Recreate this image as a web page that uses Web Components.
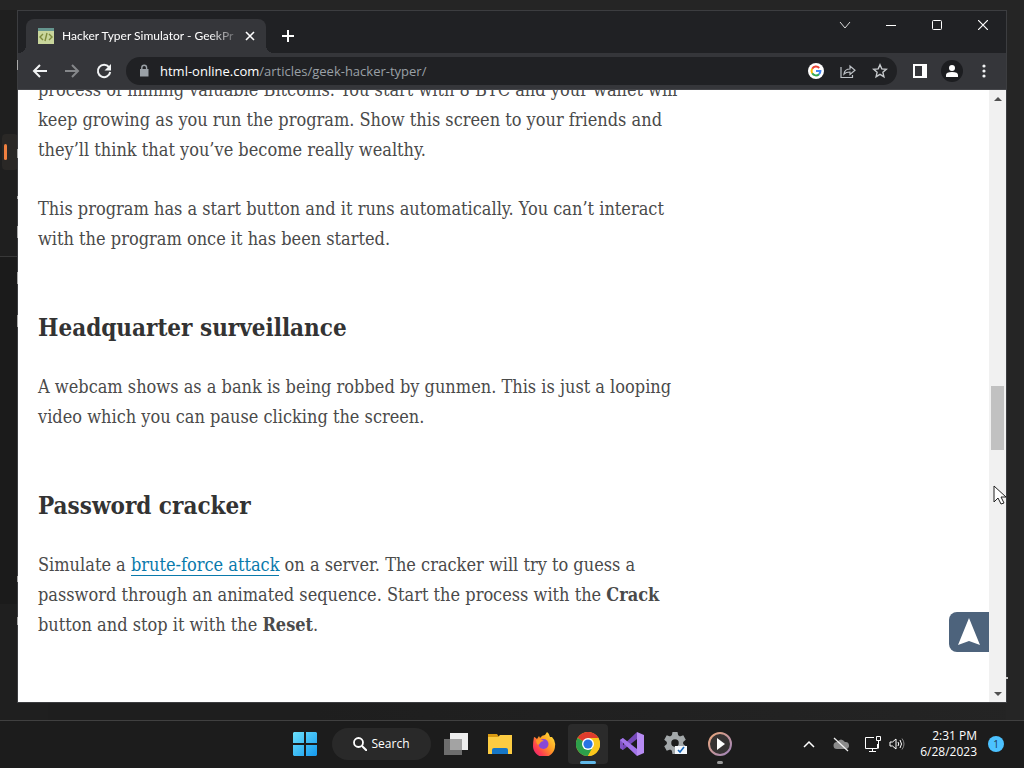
<!DOCTYPE html>
<html lang="en">
<head>
<meta charset="utf-8">
<title>Desktop</title>
<style>
html, body { margin: 0; height: 100%; overflow: hidden; background: #202020; font-family: "Open Sans", "Noto Sans", sans-serif; }
</style>
</head>
<body>
<desk-top>
  <browser-window>
    <page-article></page-article>
  </browser-window>
  <task-bar slot="bar"></task-bar>
</desk-top>
<script>
function define(name, html) {
  customElements.define(name, class extends HTMLElement {
    constructor() {
      super();
      const t = document.createElement('template');
      t.innerHTML = html;
      this.attachShadow({ mode: 'open' }).appendChild(t.content.cloneNode(true));
    }
  });
}
const reset = `*{box-sizing:border-box} svg{display:block;flex:none} button{font:inherit;color:inherit;background:none;border:0;padding:0;margin:0;display:flex;align-items:center;justify-content:center;flex:none}`;

define('desk-top', `
<style>${reset}
:host{display:grid;grid-template-rows:minmax(0,1fr) 48px;height:100vh;position:relative;background:linear-gradient(90deg,#1e1e1e 30%,#242424)}
main{position:relative;padding:10px 17px 17px;display:grid;min-height:0}
main>i{position:absolute;display:block}
.strip{left:0;top:0;width:48px;height:100%;background:#1f1f1f}
.top{left:0;top:0;width:100%;height:10px;background:#252525}
.row{left:2px;top:134px;width:16px;height:36px;background:#2a2826;border-radius:4px}
.mark{left:4px;top:144px;width:3px;height:16px;background:#f08040;border-radius:2px}
.dark{left:0;top:256px;width:18px;height:348px;background:#1b1b1b;border-top:1px solid #383838}
.right{right:0;top:0;width:18px;height:100%;background:#252525}
.dot{width:1px;background:#aaa;left:17px}
.rdot{right:16px;top:677px;width:2px;height:2px;background:#ccc}
::slotted(*){position:relative}
</style>
<main><i class="strip"></i><i class="top"></i><i class="right"></i><i class="row"></i><i class="mark"></i><i class="dark"></i><slot></slot>
<i class="dot" style="top:60px;height:10px"></i><i class="dot" style="top:149px;height:9px"></i><i class="dot" style="top:196px;height:3px"></i><i class="dot" style="top:226px;height:12px"></i><i class="dot" style="top:272px;height:12px"></i><i class="dot" style="top:315px;height:12px"></i><i class="dot" style="top:576px;height:6px"></i><i class="dot" style="top:617px;height:8px"></i><i class="rdot"></i>
</main><slot name="bar"></slot>`);

define('browser-window', `
<style>${reset}
:host{display:flex;flex-direction:column;min-width:0;min-height:0;border:1px solid #3c3d40;background:#35363a}
.view{flex:1;min-height:0;display:flex;background:#fff}
.page{flex:1;min-width:0;position:relative;overflow:hidden}
.up{position:absolute;right:0;bottom:50px;width:40px;height:40px;background:#4d637c;border-radius:8px 0 0 8px}
.cursor{position:absolute;right:0;top:474px;z-index:2}
</style>
<tab-strip></tab-strip><tool-bar></tool-bar>
<div class="view"><div class="page"><slot></slot>
<button class="up" aria-label="Back to top"><svg width="40" height="40"><path d="M20 6 31 33 20 29 9 33Z" fill="#fff"/></svg></button></div>
<scroll-bar></scroll-bar></div>
<svg class="cursor" width="13" height="20"><path d="M1 1v16l4-4 3 6 3-1-3-6h5z" fill="#fff" stroke="#222" stroke-width="1"/></svg>`);

define('tab-strip', `
<style>${reset}
:host{display:flex;height:42px;background:#202124;color:#fff;padding-left:8px}
.tab{position:relative;display:flex;align-items:center;align-self:flex-end;width:240px;height:34px;background:#35363a;border-radius:8px 8px 0 0;padding:0 8px 0 12px}
.tab::before,.tab::after{content:"";position:absolute;bottom:0;width:8px;height:8px}
.tab::before{left:-8px;background:radial-gradient(circle at 0 0,#202124 8px,#35363a 8px)}
.tab::after{right:-8px;background:radial-gradient(circle at 100% 0,#202124 8px,#35363a 8px)}
.title{flex:1;margin:0 4px 0 8px;overflow:hidden;white-space:nowrap;font:12px/18px Lato,"Open Sans",sans-serif;-webkit-mask:linear-gradient(90deg,#000 84%,transparent 102%);mask:linear-gradient(90deg,#000 84%,transparent 102%)}
.close{width:16px;height:16px}
.new{width:28px;height:34px;align-self:flex-end;margin-left:8px}
.ctl{margin-left:auto;display:flex;height:28px}
.ctl button{width:46px}
</style>
<div class="tab">
<svg width="16" height="16"><path fill="#c9d69c" d="M0 0h16v16H0z"/><path fill="#65958e" d="M0 0h16v3H0z"/><path d="M5 6 2 9l3 3M11 6l3 3-3 3M9 5 7 13" fill="none" stroke="#7c8a3d" stroke-width="1.4"/></svg>
<span class="title">Hacker Typer Simulator - GeekPr</span>
<button class="close" aria-label="Close tab"><svg width="10" height="10"><path d="m1 1 8 8M9 1 1 9" stroke="#fff" stroke-width="1.6"/></svg></button></div>
<button class="new" aria-label="New tab"><svg width="12" height="12"><path d="M6 0v12M0 6h12" stroke="#fff" stroke-width="2"/></svg></button>
<div class="ctl">
<button aria-label="Search tabs"><svg width="12" height="12"><path d="m1 3 5 6 5-6" fill="none" stroke="#ddd"/></svg></button>
<button aria-label="Minimize"><svg width="10" height="10"><path d="M0 5.5h10" stroke="#fff"/></svg></button>
<button aria-label="Maximize"><svg width="10" height="10"><rect x=".5" y=".5" width="9" height="9" rx="1" fill="none" stroke="#fff"/></svg></button>
<button aria-label="Close"><svg width="10" height="10"><path d="m0 0 10 10M10 0 0 10" stroke="#fff" stroke-width="1.2"/></svg></button>
</div>`);

define('tool-bar', `
<style>${reset}
:host{display:flex;align-items:center;height:37px;background:#35363a;color:#e8eaed;border-bottom:1px solid #46474b;padding:0 6px 0 6px}
button{width:32px;height:32px}
.omni{flex:1;min-width:0;display:flex;align-items:center;height:28px;border-radius:14px;background:#202124;margin:0 7px 0 6px;padding:0 1px 0 10px}
.field{flex:1;min-width:0;position:relative;display:flex;margin-left:8px}
.field span{color:#9aa0a6;font-size:13px;line-height:20px;white-space:nowrap;outline:0}
.field b{font-weight:400;color:#fff}
.av i{display:grid;place-items:center;width:22px;height:22px;border-radius:50%;background:#1c1d20}
</style>
<button aria-label="Back"><svg width="16" height="16"><path d="M15 8H2M8 2 2 8l6 6" fill="none" stroke="#f1f3f4" stroke-width="2"/></svg></button>
<button aria-label="Forward"><svg width="16" height="16"><path d="M1 8h13M8 2l6 6-6 6" fill="none" stroke="#85878a" stroke-width="2"/></svg></button>
<button aria-label="Reload"><svg width="16" height="16"><path d="M13 4.2A6.2 6.2 0 1 0 14.2 9" fill="none" stroke="#f1f3f4" stroke-width="2"/><path d="M15 1v6.5H8.500Z" fill="#f1f3f4"/></svg></button>
<div class="omni">
<svg width="16" height="16"><path d="M4 6h8.500v7.500H4z" fill="#9aa0a6"/><path d="M5.800 7V4.700a2.400 2.400 0 0 1 4.800 0V7" fill="none" stroke="#9aa0a6" stroke-width="1.400"/></svg>
<div class="field"><span role="textbox" aria-label="Address" contenteditable="true" spellcheck="false"><b>html-online.com</b>/articles/geek-hacker-typer/</span></div>
<button aria-label="Google"><svg width="16" height="16"><circle cx="8" cy="8" r="8" fill="#fff"/><g fill="none" stroke-width="2"><path d="M4.200 5.700A4.400 4.400 0 0 1 11.200 5" stroke="#ea4335"/><path d="M4.200 10.300a4.400 4.400 0 0 1 0-4.600" stroke="#fbbc05"/><path d="M11 11.200a4.400 4.400 0 0 1-6.800-.9" stroke="#34a853"/><path d="M8 8h4.400a4.400 4.400 0 0 1-1.400 3.200" stroke="#4285f4"/></g></svg></button>
<button aria-label="Share"><svg width="16" height="16"><path d="M1 4v10.500h11.500V12M4 11c.5-4 2.500-5 6-5V3l5 4.200-5 4.300V9c-3 0-4.500.5-6 2Z" fill="none" stroke="#bdc1c6" stroke-width="1.200"/></svg></button>
<button aria-label="Bookmark"><svg width="16" height="16"><path d="m8 1.800 1.800 4.100 4.500.4-3.400 3 1 4.400L8 11.400l-3.900 2.300 1-4.400-3.400-3 4.500-.4Z" fill="none" stroke="#c7cacd" stroke-width="1.400"/></svg></button>
</div>
<button aria-label="Side panel"><svg width="14" height="14"><path d="M1 1h12v12H1z" fill="none" stroke="#fff" stroke-width="2"/><path d="M9 0h5v14H9z" fill="#fff"/></svg></button>
<button class="av" aria-label="Profile"><i><svg width="12" height="12"><circle cx="6" cy="3" r="3" fill="#fff"/><path d="M0 12v-2q0-3 6-3t6 3v2z" fill="#fff"/></svg></i></button>
<button aria-label="Menu"><svg width="4" height="14" fill="#f1f3f4"><circle cx="2" cy="2" r="1.600"/><circle cx="2" cy="7" r="1.600"/><circle cx="2" cy="12" r="1.600"/></svg></button>`);

define('scroll-bar', `
<style>${reset}
:host{display:flex;flex-direction:column;align-items:center;width:17px;background:#f1f1f1;flex:none}
button{width:17px;height:17px}
.a{flex:279}.b{flex:235}.thumb{width:13px;height:64px;background:#c1c1c1;flex:none}
</style>
<button aria-label="Scroll up"><svg width="8" height="4"><path d="m0 4 4-4 4 4z" fill="#505050"/></svg></button>
<div class="a"></div><div class="thumb"></div><div class="b"></div>
<button aria-label="Scroll down"><svg width="8" height="4"><path d="m0 0 4 4 4-4z" fill="#505050"/></svg></button>`);

define('page-article', `
<style>${reset}
:host{display:block;margin-top:-15px;padding:0 20px;font-family:"DejaVu Serif Condensed","Liberation Serif",serif;font-size:18px;line-height:30px;color:#4a4a4a;white-space:nowrap}
p{margin:0 0 29px}
h2{margin:55px 0 25px;font-size:24px;line-height:38px;font-weight:700;color:#333}
a{color:#0a7aac;text-decoration:none;border-bottom:1px solid #0a7aac}
</style>
<p>process of mining valuable Bitcoins. You start with 8 BTC and your wallet will<br>keep growing as you run the program. Show this screen to your friends and<br>they’ll think that you’ve become really wealthy.</p>
<p>This program has a start button and it runs automatically. You can’t interact<br>with the program once it has been started.</p>
<h2>Headquarter surveillance</h2>
<p>A webcam shows as a bank is being robbed by gunmen. This is just a looping<br>video which you can pause clicking the screen.</p>
<h2>Password cracker</h2>
<p>Simulate a <a href="#brute-force">brute-force attack</a> on a server. The cracker will try to guess a<br>password through an animated sequence. Start the process with the <b>Crack</b><br>button and stop it with the <b>Reset</b>.</p>`);

define('task-bar', `
<style>${reset}
:host{display:grid;grid-template-columns:1fr auto 1fr;background:#1c1c1c;border-top:1px solid #404040;padding-bottom:2px;color:#fff;font-size:12px}
.apps{grid-column:2;display:flex;align-items:center}
.apps>button{width:44px;height:40px;position:relative}
.apps .search{width:99px;height:32px;border-radius:16px;background:#292929;margin:0 3px 0 5px;gap:5px}
.apps .on::before{content:"";position:absolute;inset:0 2px;border-radius:4px;background:#2b2b2b}
.on svg{position:relative}
.on::after,.run::after{content:"";position:absolute;bottom:0;left:14px;width:16px;height:3px;border-radius:2px;background:#60b8e8}
.run::after{left:19px;width:6px;background:#999}
.tray{display:flex;align-items:center;justify-content:flex-end;padding-right:20px}
.tray time{text-align:right;line-height:16px;margin:0 11px 0 15px}
.tray .n{width:16px;height:16px;border-radius:50%;background:#4cc2ff;color:#1c3a50;font-size:10px}
</style>
<div class="apps">
<button aria-label="Start"><svg width="24" height="24"><defs><linearGradient id="w" x2="1" y2="1"><stop stop-color="#6be0fb"/><stop offset="1" stop-color="#1498ee"/></linearGradient></defs><path d="M1 0h10v11H0V1zM13 0h10l1 1v10H13zM0 13h11v11H1l-1-1zM13 13h11v10l-1 1H13z" fill="url(#w)"/></svg></button>
<button class="search"><svg width="14" height="14"><circle cx="5.500" cy="5.500" r="4.500" fill="none" stroke="#fff" stroke-width="1.800"/><path d="m9 9 5 5" stroke="#fff" stroke-width="2"/></svg><span>Search</span></button>
<button aria-label="Task view"><svg width="24" height="24"><path d="M6 1h18v17H6z" fill="#eee"/><path d="M0 7h18v16H0z" fill="#777" opacity=".9"/><path d="M6 7h12v11H6z" fill="#a3a3a3"/></svg></button>
<button aria-label="File Explorer"><svg width="24" height="24"><path d="M0 2h9l2 3H0z" fill="#d99a12"/><path d="M0 5h10l2-2h12v19H0z" fill="#fccc42"/><path d="M4 22v-4q0-2 2-2h12q2 0 2 2v4z" fill="#1676c6"/></svg></button>
<button aria-label="Firefox"><svg width="24" height="24"><defs><linearGradient id="f" x1="1" y1="0" x2="0" y2="1"><stop stop-color="#fff13d"/><stop offset=".45" stop-color="#ff9a24"/><stop offset=".75" stop-color="#ff3b52"/><stop offset="1" stop-color="#d9207c"/></linearGradient></defs><path d="M2 5q1 0 3 2l2-3 1 2q2-3 5-3l2-3q2 1 3 5l2 0q4 4 3 9a11 11 0 0 1-22 0Q1 10 2 5" fill="url(#f)"/><circle cx="11.500" cy="12" r="5" fill="#8848d8"/><path d="M4 8q4-2 8 1-3 0-4 2 0 1-2 2-2-2-2-5" fill="#ff9a26"/></svg></button>
<button class="on" aria-label="Google Chrome"><svg width="24" height="24"><circle cx="12" cy="12" r="12" fill="#fbc71c"/><path d="M12 12 1.600 6a12 12 0 0 1 20.800 0z" fill="#df3b2d"/><path d="m12 12-10.400-6A12 12 0 0 0 12 24l5-9z" fill="#2da04b"/><path d="m17 15-5 9A12 12 0 0 0 22.400 6H12z" fill="#fbc71c"/><circle cx="12" cy="12" r="6" fill="#fff"/><circle cx="12" cy="12" r="4.600" fill="#2874e4"/></svg></button>
<button aria-label="Visual Studio"><svg width="24" height="24"><path d="M17 24 24 21V3l-7-3z" fill="#b78bf3"/><path d="m17 7-14 11-3-2L17 0z" fill="#7648ba"/><path d="M0 8l3-2v12l-3-2z" fill="#8053c4"/><path d="m0 8 3-2 14 11v7z" fill="#a274e8"/></svg></button>
<button aria-label="System tool"><svg width="24" height="24"><g transform="translate(11 11)"><g fill="#a3a8aa"><path id="g" d="M-2.500-11h5l1 5h-7zM-2.500 11h5l1-5h-7z"/><use href="#g" transform="rotate(60)"/><use href="#g" transform="rotate(120)"/></g><circle r="6" fill="none" stroke="#a3a8aa" stroke-width="4.500"/></g><path d="M11 14h12v8H11z" fill="#f4f8fc"/><path d="m14 18 2 2 4-5" fill="none" stroke="#1667bb" stroke-width="1.600"/></svg></button>
<button class="run" aria-label="Media Player"><svg width="24" height="24"><defs><linearGradient id="m" x2="1" y2="1"><stop stop-color="#eaa77b"/><stop offset="1" stop-color="#9d83ba"/></linearGradient></defs><circle cx="12" cy="12" r="11" fill="#363333" stroke="url(#m)" stroke-width="2"/><path d="m9 6 8 6-8 6z" fill="#fff"/></svg></button>
</div>
<div class="tray">
<button aria-label="Hidden icons"><svg width="12" height="12"><path d="m1 9 5-5 5 5" fill="none" stroke="#fff" stroke-width="1.500"/></svg></button>
<svg style="margin-left:18px" width="16" height="16" aria-label="OneDrive"><path d="M4 13a3.500 3.500 0 0 1 0-7q4-5 8 0a3.500 3.500 0 0 1 1 7z" fill="#8a8a8a"/><path d="m1 2 14 13" stroke="#eee" stroke-width="1.300"/></svg>
<svg style="margin-left:16px" width="16" height="16" aria-label="Network"><path d="M9 1.500H.5v11h12V8M4 15.500h7M7.500 12.500v3M11.500.5h4v4h-4zM13.500 4.500v8" fill="none" stroke="#fff"/></svg>
<svg style="margin-left:8px" width="16" height="16" aria-label="Volume"><path d="M1 6v4h2.500L7 13V3L3.500 6zM9 6q1.500 2 0 4M11 4q3 4 0 8" fill="none" stroke="#fff"/><path d="M13 2.500q4 5.500 0 11" fill="none" stroke="#888"/></svg>
<time>2:31 PM<br>6/28/2023</time>
<button class="n" aria-label="1 notification">1</button>
</div>`);
</script>
</body>
</html>
